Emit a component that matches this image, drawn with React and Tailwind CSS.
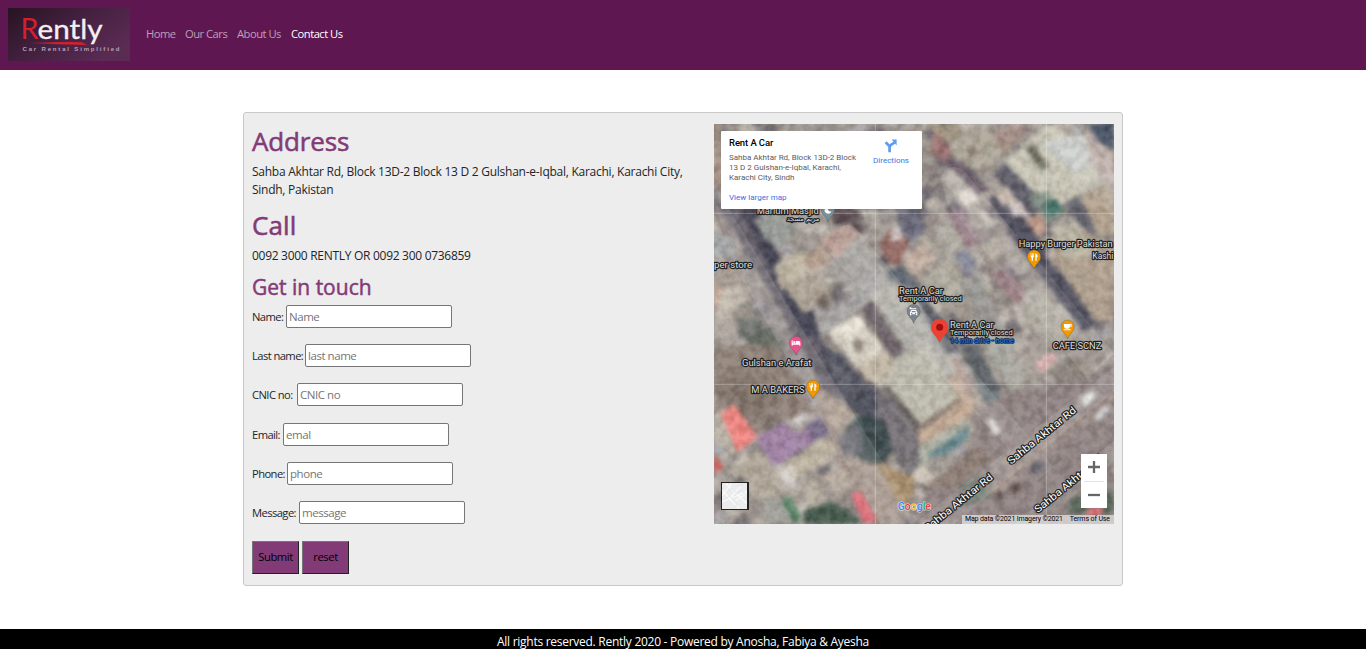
import React from "react";

const NAV = [
  { label: "Home", cls: "w-[39px] text-[#bf9fb9]" },
  { label: "Our Cars", cls: "w-[52px] text-[#bf9fb9]" },
  { label: "About Us", cls: "w-[54px] text-[#bf9fb9]" },
  { label: "Contact Us", cls: "w-[60px] text-white" },
];

const FIELDS = [
  { label: "Name:", hint: "Name", cls: "w-[34px]" },
  { label: "Last name:", hint: "last name", cls: "w-[53px]" },
  { label: "CNIC no:", hint: "CNIC no", cls: "w-[45px]" },
  { label: "Email:", hint: "emal", cls: "w-[31px]" },
  { label: "Phone:", hint: "phone", cls: "w-[35px]" },
  { label: "Message:", hint: "message", cls: "w-[47px]" },
];

// Small rooftops on a rotated street grid, seeded so that every load is identical.
const TONES = ["#b5ada6", "#a39b95", "#8d8480", "#c2bbb1", "#9c9388", "#777174", "#aaa29b", "#bdb5ad", "#938783", "#6b666d", "#b0a79a", "#a8a4a6"];
let seed = 41;
const rnd = () => {
  seed = (seed * 16807) % 2147483647;
  return seed / 2147483647;
};
const ROOFS = [];
for (let y = -700; y < 1000; y += 44) {
  for (let x = -300; x < 1500; x += 44) {
    ROOFS.push({
      x: x + rnd() * 20,
      y: y + rnd() * 20,
      w: 22 + rnd() * 46,
      h: 18 + rnd() * 42,
      c: TONES[Math.floor(rnd() * TONES.length)],
    });
  }
}

const AREAS = [
  // upper left blocks
  ["0,0 20,0 20,180 0,190", "#a08b7a"],
  ["0,190 30,250 90,250 210,440 300,560 330,660 480,780 600,930 615,1010 560,1000 430,870 330,800 200,560 60,320 0,240", "#5b5560"],
  ["20,250 90,250 200,430 250,560 310,640 300,700 180,510", "#666069"],
  ["80,250 130,250 215,440 240,500 290,540 310,650 260,620 170,440", "#3f3f50"],
  ["0,330 45,340 65,385 30,415 0,400", "#bcc8c9"],
  ["0,400 80,400 130,460 100,500 0,510", "#a99d95"],
  ["0,475 25,490 20,540 0,560", "#d3b6a5"],
  ["30,490 80,480 110,520 30,590 0,580", "#c8bfb2"],
  ["60,590 130,575 165,620 120,665 70,640", "#70736f"],
  ["0,590 60,570 75,610 20,650 0,640", "#b1aaa1"],
  ["100,640 180,600 215,665 170,700 110,680", "#596355", 0.7],
  ["0,670 180,660 260,780 300,870 210,890 120,940 0,860", "#8b7b70", 0.8],
  ["0,780 100,740 210,810 130,890 40,850", "#7d7067", 0.8],
  ["20,300 60,360 200,590 330,800 470,1040 560,1200 430,1200 380,1030 290,820 150,590 70,440 0,370", "#8a8082", 0.45],
  ["290,780 390,830 430,900 480,960 590,1110 570,1200 460,1200 350,960", "#a5958a"],
  ["330,830 400,850 390,920 350,910", "#b2a194"],
  // houses north of the long building
  ["120,290 180,265 245,300 205,370 155,350", "#989d98"],
  ["180,425 265,375 300,430 200,500", "#c4b9a5"],
  ["210,490 300,440 355,520 270,570", "#b2a797"],
  ["320,350 400,300 435,330 365,410", "#b8988d"],
  ["385,385 440,340 520,440 430,510 350,445", "#a6a29d"],
  ["350,255 430,255 480,330 440,330 405,300 360,305", "#54454b"],
  ["430,290 530,250 600,290 540,350 450,340", "#a8a39d", 0.6],
  ["260,410 320,360 355,410 300,440", "#b9a28f"],
  ["300,530 335,505 350,540 325,560", "#6f6259"],
  ["500,355 530,310 590,350 550,430 510,400", "#956760"],
  ["530,320 555,310 565,345 530,355", "#d8ccca"],
  ["545,255 600,250 640,315 590,355 560,320", "#666678"],
  ["565,400 630,355 665,405 605,455", "#c8b3a5"],
  ["520,440 560,425 610,475 600,510 520,485", "#59616c"],
  ["650,310 720,290 780,370 700,410", "#b4afa5"],
  ["700,270 745,250 800,350 760,380", "#9a818a"],
  ["720,390 760,375 790,420 760,460", "#86889a"],
  ["620,470 700,410 770,480 690,550", "#b4aea1"],
  ["735,475 790,445 850,560 800,600", "#9b9a96"],
  // long pale building and neighbours
  ["310,590 500,450 525,490 320,640", "#aaa8a6"],
  ["440,540 520,465 610,500 725,740 640,760 560,720", "#b4b1aa"],
  ["340,625 430,570 530,700 430,735", "#ded8c9"],
  ["360,615 440,575 460,610 400,650", "#eee8db"],
  ["420,640 450,650 445,690 420,680", "#95877d"],
  ["445,550 475,530 575,680 530,705", "#685f64"],
  ["310,660 380,690 430,760 480,800 505,910 420,860 350,760", "#494d59"],
  ["340,700 400,740 430,810 380,820", "#60606b"],
  ["440,730 520,680 550,720 500,780 450,770", "#c4b8a5"],
  ["485,775 615,700 740,820 610,910", "#c7c0ae"],
  ["505,770 560,700 650,660 725,825 620,895", "#bfbcaf"],
  ["485,790 610,915 620,1020 580,1060 490,920", "#777276"],
  ["500,790 520,785 625,905 612,925", "#5e5656"],
  ["610,915 740,820 780,840 760,910 620,1010", "#c5b4a0"],
  ["615,910 740,820 700,765 725,755 790,840 760,880 620,960", "#c4a994"],
  ["625,900 730,822 737,832 625,925", "#8a7b71"],
  ["620,965 760,880 760,910 610,1040", "#aeb1a5"],
  ["640,990 765,905 765,940 700,990 640,1000", "#60858a"],
  ["580,1060 625,1020 665,1065 635,1085", "#d5cabd"],
  ["430,875 510,890 535,980 500,1030 410,990 385,930", "#354548"],
  ["370,940 430,900 450,980 390,1000", "#68676e"],
  ["480,1010 600,1060 600,1110 560,1150", "#a78b67"],
  // shadows east of the long building
  ["600,510 640,530 710,620 740,690 690,680 640,590", "#50545f", 0.85],
  ["730,650 790,660 860,800 830,820 770,740", "#535b60", 0.85],
  ["780,760 840,790 860,830 820,850", "#646e74"],
  ["700,690 740,720 790,820 750,800", "#b39b91"],
  ["785,620 850,590 960,740 890,800", "#a9aaa1"],
  ["960,720 1015,680 1030,710 980,750", "#e2b8b8"],
  ["880,690 940,650 980,700 940,760", "#b8aba2", 0.6],
  ["1000,740 1090,690 1120,765 1050,800", "#817870", 0.8],
  ["900,510 970,480 1090,620 1020,680 960,620", "#b0aca0"],
  ["830,450 870,430 940,500 910,550", "#9a7d83"],
  // upper right
  ["640,0 730,0 750,40 680,60", "#a39580"],
  ["660,20 720,80 690,120 650,80", "#a3696a", 0.7],
  ["700,60 780,0 870,40 880,90 800,140 730,110", "#b0a99a"],
  ["765,70 790,75 785,95 765,95", "#756256"],
  ["830,30 880,0 960,0 870,90", "#a2867d", 0.7],
  ["630,130 690,130 720,190 650,170", "#8b8281"],
  ["680,160 730,125 790,220 740,250", "#b7afa7"],
  ["735,210 770,190 790,230 755,250", "#f1eadf"],
  ["690,110 740,110 830,200 790,210", "#655663"],
  ["870,115 1000,0 1110,60 1180,160 1010,260 930,220", "#cecbba"],
  ["980,60 1110,30 1150,110 1080,150", "#cccfcc"],
  ["930,70 960,60 1005,130 985,140", "#626352"],
  ["870,115 945,190 1010,260 960,290 840,150", "#585663"],
  ["940,215 1000,200 1060,260 1000,300", "#808e83"],
  ["990,240 1025,225 1045,260 1000,280", "#376b62"],
  ["930,290 980,265 1000,320 960,340", "#c79f8d"],
  ["820,220 870,210 960,320 1010,420 1080,490 1160,590 1110,625 1020,510 930,390", "#484757"],
  ["1010,390 1110,310 1200,390 1200,590 1140,590", "#b2a18e"],
  ["1005,310 1080,290 1150,380 1060,410", "#bdb8a6"],
  ["1060,230 1095,220 1150,310 1135,335 1080,285", "#5e5e68"],
  ["1100,220 1170,180 1200,230 1200,330 1150,330", "#b3a18b"],
  ["1110,30 1140,20 1200,100 1200,210 1130,120", "#c2b3ac"],
  ["1120,0 1200,0 1200,80 1150,50", "#404d61"],
  ["840,210 880,190 910,230 870,250", "#d1c1b5"],
  ["880,240 920,230 940,270 900,280", "#d9cdca"],
  // lower left
  ["0,870 30,850 80,960 60,990 0,950", "#bbb4a6"],
  ["20,870 60,840 130,940 70,985", "#f98480"],
  ["0,990 30,1030 0,1050", "#e0665e"],
  ["125,940 210,895 240,925 300,910 320,940 180,1030", "#a181a7"],
  ["225,895 270,860 280,875 240,910", "#d5d0d0"],
  ["270,900 320,880 350,930 300,950", "#746886"],
  ["185,1040 330,940 370,980 330,1020 230,1070", "#c4b9a6"],
  ["70,1030 130,970 180,1040 215,1100 150,1130 110,1110", "#b5aa9b"],
  ["180,1020 240,1030 245,1090 215,1100", "#d7d1cb"],
  ["255,1080 300,1060 340,1140 300,1170", "#b8aea0"],
  ["320,1060 380,1020 420,1070 380,1120", "#b9ac9f"],
  ["200,1130 225,1115 265,1180 240,1195", "#518261"],
  ["270,1160 350,1130 430,1180 430,1200 270,1200", "#3f5547"],
  ["410,1110 440,1100 490,1190 450,1200", "#e46b78"],
  ["150,1120 200,1130 240,1200 150,1200", "#a2a19b"],
  // main road
  ["640,1100 770,960 800,850 900,800 1120,765 1200,700 1200,1000 900,1200 590,1200", "#8f8382"],
  ["620,1100 800,960 830,1010 720,1090", "#8d7d74"],
  ["800,1100 1200,800 1200,830 830,1130", "#a0908a"],
  ["830,1030 1140,790 1160,815 850,1055", "#a69c98", 0.6],
  ["740,1090 800,1050 830,1120 730,1150", "#69766a"],
  ["900,1200 1200,980 1200,1200", "#897d7a"],
  ["940,1030 980,1005 1000,1025 960,1060", "#54505a"],
  ["885,1085 915,1075 920,1100 890,1110", "#5d4c49"],
  ["840,1110 860,1100 870,1120 840,1130", "#5d4c49"],
  ["1100,820 1135,800 1145,820 1110,850", "#f1f0f0"],
  ["1140,875 1180,840 1185,860 1150,890", "#dddde2"],
  ["820,890 840,885 860,925 840,935", "#eae6e1"],
  ["1070,1120 1110,1110 1200,1100 1200,1170 1060,1170", "#5d6b5d"],
  ["1125,1150 1170,1150 1160,1175 1115,1175", "#e36c75"],
];

function Aerial() {
  return (
    <>
      <rect width="1200" height="1200" fill="#9d958f" />
      <g filter="url(#soft)">
        <g transform="rotate(-38 600 600)">
          <g transform="translate(0 450)">
            {ROOFS.map((r, i) => (
              <rect key={i} x={r.x} y={r.y} width={r.w} height={r.h} fill={r.c} />
            ))}
          </g>
        </g>
        {AREAS.map(([points, fill, opacity], i) => (
          <polygon key={i} points={points} fill={fill} opacity={opacity ?? 0.94} />
        ))}
      </g>
      <rect width="1200" height="1200" filter="url(#grain)" opacity="0.09" />
      <g fill="#fff" opacity="0.1">
        <path d="M0 240V180L620 1200H500L70 440Z" />
        <path d="M380 310Q410 290 440 330L1020 1030L970 1070L350 390Z" />
        <path d="M680 160Q700 110 750 140L1200 690L1120 765L700 240Z" />
        <path d="M1010 0H1080L1200 150V290L1020 60Z" />
        <path d="M600 1200L1200 730V800L720 1200Z" />
        <path d="M900 1200L1200 950V1010L980 1200Z" />
      </g>
      <path d="M484 0V1200M997 0V1200M0 268H1200M0 781H1200" stroke="#fff" strokeWidth="3" opacity="0.28" />
    </>
  );
}

function Label({ x, y, w, size = 25, fill = "#dedede", children, ...rest }) {
  return (
    <text x={x} y={y} textLength={w} lengthAdjust="spacingAndGlyphs" fontSize={size} fill={fill} stroke="#222" strokeWidth="7" paintOrder="stroke" strokeLinejoin="round" {...rest}>
      {children}
    </text>
  );
}

function Pin({ x, y, fill, children }) {
  return (
    <g transform={`translate(${x} ${y})`}>
      <path d="M0 0C-4-16-20-21-20-37A20 20 0 0 1 20-37C20-21 4-16 0 0Z" fill={fill} stroke="#4e4a48" strokeOpacity="0.5" strokeWidth="2" />
      <g transform="translate(0 -36)" fill="#fff">{children}</g>
    </g>
  );
}

const Fork = () => <path d="M-10-11h2v7h2v-7h2v7h2v-7h2v9q0 3-3 4v9h-4v-9q-3-1-3-4ZM4 11V-11q7 2 7 11H8v11Z" />;
const Car = () => (
  <path fillRule="evenodd" d="M-12-12h5v3h15v3H-12ZM-7-4H7l4 7v9H7V9H-7v3h-4V3ZM-5-1l-2 4H7L5-1ZM-8 5h4v3h-4ZM4 5h4v3H4Z" />
);

function MapPanel() {
  return (
    <div className="relative h-[400px] w-[400px] overflow-hidden font-[Roboto,sans-serif]">
      <svg className="block h-[400px] w-[400px]" viewBox="0 0 1200 1200" fontFamily="Roboto, sans-serif">
        <defs>
          <filter id="soft" x="0" y="0" width="1" height="1" colorInterpolationFilters="sRGB">
            <feGaussianBlur stdDeviation="6" />
          </filter>
          <filter id="grain" x="0" y="0" width="1" height="1" colorInterpolationFilters="sRGB">
            <feTurbulence type="fractalNoise" baseFrequency="0.04" numOctaves="3" seed="8" />
            <feColorMatrix values="2.4 0 0 0 -0.6  2.4 0 0 0 -0.6  2.4 0 0 0 -0.6  0 0 0 0 1" />
          </filter>
        </defs>
        <Aerial />
        <Label x="128" y="271" w="186">Marium Masjid</Label>
        <Label x="218" y="291" w="98" size="20" fontFamily="'DejaVu Sans', sans-serif">مریم مسجد</Label>
        <Pin x="342" y="294" fill="#78909c">
          <path d="M2-11A11 11 0 1 0 11 4A9 9 0 0 1 2-11Z" />
        </Pin>
        <Label x="0" y="431" w="114">per store</Label>
        <Label x="914" y="369" w="282">Happy Burger Pakistan</Label>
        <Label x="1135" y="405" w="63">Kashi</Label>
        <Pin x="960" y="435" fill="#f29900"><Fork /></Pin>
        <Label x="555" y="509" w="132">Rent A Car</Label>
        <Label x="555" y="532" w="188" size="21">Temporarily closed</Label>
        <Pin x="599" y="598" fill="#7b8390"><Car /></Pin>
        <path d="M677 658C672 638 651 631 651 610A26 26 0 0 1 703 610C703 631 682 638 677 658Z" fill="#ea4335" />
        <circle cx="677" cy="610" r="10.5" fill="#a50e0e" />
        <Label x="708" y="613" w="131">Rent A Car</Label>
        <Label x="708" y="634" w="188" size="21">Temporarily closed</Label>
        <Label x="708" y="657" w="192" size="21" fill="#3f7fd0" stroke="#0f2a50" strokeWidth="5">14 min drive - home</Label>
        <Pin x="1061" y="645" fill="#f29900">
          <path fillRule="evenodd" d="M-11-9H12v8H7q-1 6-6 6h-5q-6 0-7-6ZM7-6v3h2v-3ZM-12 7H9v3h-21Z" />
        </Pin>
        <Label x="1016" y="675" w="146">CAFE SCNZ</Label>
        <Pin x="246" y="694" fill="#e8528d">
          <path d="M-13-9h3v9h10v-7h8q5 0 5 5v9h-3V4h-20v3h-3ZM-8-6h6v5h-6Z" />
        </Pin>
        <Label x="84" y="725" w="208">Gulshan e Arafat</Label>
        <Label x="112" y="807" w="160">M A BAKERS</Label>
        <Pin x="297" y="825" fill="#f29900"><Fork /></Pin>
        <Label x="0" y="0" w="254" size="30" fill="#fff" transform="translate(891 1022) rotate(-39)">Sahba Akhtar Rd</Label>
        <Label x="0" y="0" w="254" size="30" fill="#fff" transform="translate(641 1223) rotate(-39)">Sahba Akhtar Rd</Label>
        <Label x="0" y="0" w="254" size="30" fill="#fff" transform="translate(971 1168) rotate(-39)">Sahba Akhtar Rd</Label>
        <text x="551" y="1157" textLength="100" lengthAdjust="spacingAndGlyphs" fontSize="31" fontWeight="500" stroke="#fff" strokeOpacity="0.75" strokeWidth="3" paintOrder="stroke">
          <tspan fill="#4285f4">G</tspan><tspan fill="#ea4335">o</tspan><tspan fill="#fbbc05">o</tspan><tspan fill="#4285f4">g</tspan><tspan fill="#34a853">l</tspan><tspan fill="#ea4335">e</tspan>
        </text>
      </svg>

      <div className="absolute left-[7px] top-[7px] flex h-[78px] w-[201px] justify-between rounded-[1px] bg-white pl-2 pr-[13px] shadow-sm">
        <div className="w-[135px] whitespace-nowrap text-[8px] leading-[10px] text-[#5b5b5b]">
          <div className="mt-[5px] text-[9.5px] font-medium leading-[14px] tracking-[-0.1px] text-black">Rent A Car</div>
          <div className="mt-[3px]">Sahba Akhtar Rd, Block 13D-2 Block<br />13 D 2 Gulshan-e-Iqbal, Karachi,<br />Karachi City, Sindh</div>
          <div className="mt-[10px] text-[#3a6fe0]">View larger map</div>
        </div>
        <div className="flex flex-col items-center pt-2 text-[8px] leading-[10px] text-[#3a78e0]">
          <svg className="mb-[2px] h-[14px] w-[14px]" viewBox="0 0 14 14">
            <path d="M1.6 3.2L5.6 7.4V13.2M5.6 9Q5.6 6.6 7.6 5.4L10.5 3.6" fill="none" stroke="#5c9ded" strokeWidth="2.7" />
            <path d="M7.6 0.6H12.6V6.4Z" fill="#5c9ded" />
          </svg>
          <span className="mt-px">Directions</span>
        </div>
      </div>

      <div className="absolute left-[7px] top-[358px] h-7 w-7 border border-r-2 border-[#222] bg-[#ececee]">
        <svg className="block h-[26px] w-[25px]" viewBox="0 0 26 26" fill="none">
          <path d="M0 13L10 0M0 19L26 8M4 0L26 21M0 7L18 26M9 14L20 2M14 18L26 10" stroke="#f9f9f9" strokeWidth="1.4" />
          <path d="M3 17L8 13L16 22L11 26M5 9L10 5L15 10M13 13L20 7L25 12M17 3L22 1" stroke="#dadce0" strokeWidth="0.7" />
        </svg>
      </div>

      <div className="absolute left-[367px] top-[330px] flex h-[54px] w-[26px] flex-col items-center bg-white">
        <svg className="h-[27px] w-[26px]" viewBox="0 0 26 27"><path d="M7 13h12M13 7v12" stroke="#666" strokeWidth="2.3" /></svg>
        <div className="h-px w-5 shrink-0 bg-[#e3e3e3]" />
        <svg className="h-[26px] w-[26px]" viewBox="0 0 26 26"><path d="M7 13h12" stroke="#666" strokeWidth="2.3" /></svg>
      </div>

      <div className="absolute bottom-0 right-0 flex h-[9px] w-[152px] items-center justify-between whitespace-nowrap bg-[#e4e2e1]/75 pl-[3px] pr-1 text-[7px] leading-[9px] text-black">
        <span className="tracking-[-0.16px]">Map data ©2021 Imagery ©2021</span>
        <span className="tracking-[-0.1px]">Terms of Use</span>
      </div>
    </div>
  );
}

function Logo() {
  return (
    <svg className="h-[53px] w-[122px]" viewBox="0 0 122 53">
      <defs>
        <linearGradient id="plate" x1="0" y1="0" x2="1" y2="0.6">
          <stop offset="0" stopColor="#271321" />
          <stop offset="0.5" stopColor="#43203f" />
          <stop offset="1" stopColor="#5a2b53" />
        </linearGradient>
        <linearGradient id="swoosh" x1="0" x2="1">
          <stop offset="0" stopColor="#d5202c" stopOpacity="0" />
          <stop offset="0.5" stopColor="#d5202c" />
        </linearGradient>
      </defs>
      <rect width="122" height="53" fill="url(#plate)" />
      <path d="M16 35.2Q50 33.8 74 34.2L79 37Z" fill="url(#swoosh)" />
      <text x="12.5" y="31" fontFamily="Lato, sans-serif" fontSize="28" fill="#d5202c" textLength="18" lengthAdjust="spacingAndGlyphs">R</text>
      <text x="29.5" y="31" fontFamily="Lato, sans-serif" fontSize="26" fill="#f5eff4" stroke="#f5eff4" strokeWidth="0.3" textLength="65" lengthAdjust="spacingAndGlyphs">ently</text>
      <text x="14.5" y="43.3" fontFamily="'Liberation Sans', sans-serif" fontSize="6" fontWeight="700" fill="#b9a3b7" textLength="97">Car Rental Simplified</text>
    </svg>
  );
}

export default function App() {
  return (
    <div className="flex h-[652px] flex-col bg-white font-['Open_Sans',sans-serif] text-xs text-[#212529]">
      <header className="flex h-[70px] shrink-0 bg-[#5f1751] pl-2 pt-2">
        <Logo />
        <nav className="ml-4 flex h-[53px] items-center whitespace-nowrap text-[11.2px] tracking-[-0.5px]">
          {NAV.map((n) => (
            <a key={n.label} className={n.cls}>{n.label}</a>
          ))}
        </nav>
      </header>

      <main className="mx-auto mt-[42px] flex h-[474px] w-[880px] shrink-0 rounded-[3px] border border-[#c9c9c9] bg-[#ededed]">
        <section className="w-[470px] shrink-0 pl-2 pt-[12px]">
          <h1 className="h-[33px] text-[26px] leading-[33px] tracking-[-0.15px] text-[#833b77] [-webkit-text-stroke:0.55px_#833b77]">Address</h1>
          <p className="mt-[5px] whitespace-nowrap leading-[18px] tracking-[-0.26px]">
            Sahba Akhtar Rd, Block 13D-2 Block 13 D 2 Gulshan-e-Iqbal, Karachi, Karachi City,<br />Sindh, Pakistan
          </p>
          <h1 className="mt-[10px] h-[33px] text-[26px] leading-[33px] tracking-[0.1px] text-[#833b77] [-webkit-text-stroke:0.55px_#833b77]">Call</h1>
          <p className="mt-[5px] leading-[18px] tracking-[-0.29px]">0092 3000 RENTLY OR 0092 300 0736859</p>
          <h2 className="mt-[8px] h-[28px] text-[21px] leading-[28px] text-[#833b77] [-webkit-text-stroke:0.5px_#833b77]">Get in touch</h2>
          <form className="mt-[4px]">
            <div className="flex flex-col gap-[16.2px]">
              {FIELDS.map((f) => (
                <label key={f.label} className="flex h-[23px] items-center whitespace-nowrap text-[11.2px] tracking-[-0.57px]">
                  <span className={`${f.cls} pt-[2px]`}>{f.label}</span>
                  <input
                    placeholder={f.hint}
                    className="h-[23px] w-[166.4px] rounded-[2px] border border-[#767676] bg-white px-[2px] text-[11.5px] tracking-[-0.45px] placeholder:text-[#757575]"
                  />
                </label>
              ))}
            </div>
            <div className="mt-[17px] flex gap-[3px] text-[11.2px] tracking-[-0.4px] text-black">
              <button type="button" className="h-[33px] w-[47px] border border-b-[#222] border-l-[#767676] border-r-[#222] border-t-[#767676] bg-[#833b77]">Submit</button>
              <button type="button" className="h-[33px] w-[47px] border border-b-[#222] border-l-[#767676] border-r-[#222] border-t-[#767676] bg-[#833b77]">reset</button>
            </div>
          </form>
        </section>
        <div className="pt-[11px]">
          <MapPanel />
        </div>
      </main>

      <footer className="mt-[43px] h-5 shrink-0 bg-black pt-[4px] text-center leading-[18px] tracking-[-0.27px] text-white">
        All rights reserved. Rently 2020 - Powered by Anosha, Fabiya &amp; Ayesha
      </footer>
    </div>
  );
}
